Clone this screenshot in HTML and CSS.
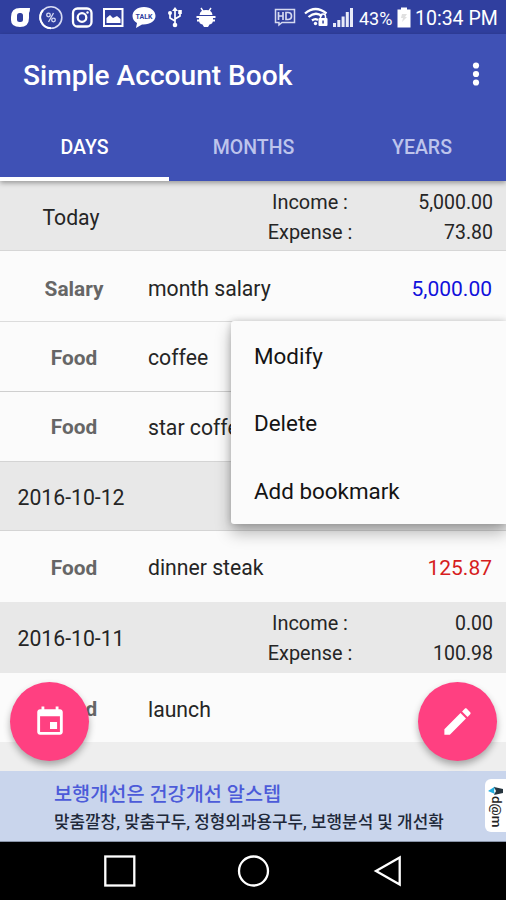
FILE: index.html
```html
<!DOCTYPE html>
<html lang="en">
<head>
<meta charset="utf-8">
<title>Simple Account Book</title>
<link rel="stylesheet" href="styles.css">
</head>
<body>
<div class="phone">
  <div class="status">
    <svg class="notices" width="220" height="34" viewBox="0 0 220 34" fill="none" stroke="#fff">
      <path d="M30 8H20Q11 8 11 17V20Q11 27 20 27Q29 27 29 18V13Q30 12 30 8Z" fill="#fff" stroke="none"/>
      <rect x="17" y="13" width="6" height="9" rx="2.500" fill="#303f9f" stroke="none"/>
      <circle cx="51" cy="17.500" r="10.800" stroke-width="1.600" stroke="#d8dcf4"/>
      <path d="M43 10A11 11 0 0 0 51 28.300" stroke-width="2"/>
      <g stroke-width="1.300" stroke="#d8dcf4"><circle cx="48.500" cy="15" r="1.800"/><circle cx="53.500" cy="20" r="1.800"/><path d="M53.500 13L48.500 22"/></g>
      <rect x="73" y="8.500" width="18.500" height="18" rx="4.500" stroke-width="2.300"/>
      <circle cx="82" cy="17.500" r="4.300" stroke-width="2.300"/>
      <circle cx="87.500" cy="12.500" r="1.200" fill="#fff" stroke="none"/>
      <rect x="104" y="9" width="18.500" height="17" stroke-width="2"/>
      <path d="M106.500 23V18L110 15L113 18L117 16L120.500 19V23Z" fill="#fff" stroke="none"/>
      <path d="M144 7C137 7 132.500 11 132.500 16C132.500 19.500 134.500 21.500 137 23L136 28L142 24.500C150 25 155.500 21 155.500 16C155.500 11 151 7 144 7Z" fill="#fff" stroke="none"/>
      <text class="talk" x="144" y="18.500" text-anchor="middle">TALK</text>
      <path d="M175 10V25M175 21L170 18V13M175 19L180 16V12" stroke-width="1.700"/>
      <path d="M175 7L178 11H172Z" fill="#fff" stroke="none"/>
      <rect x="178.200" y="10" width="3.600" height="4" fill="#fff" stroke="none"/>
      <circle cx="170" cy="13" r="2" fill="#fff" stroke="none"/><circle cx="175" cy="25" r="2.300" fill="#fff" stroke="none"/>
      <path d="M201 8L203 11M211 8L209 11" stroke-width="1.400"/>
      <path d="M199.500 15Q200 10 206 10Q212 10 212.500 15ZM199 16.500H213V20Q213 24 209.500 24.500L208 27H204L202.500 24.500Q199 24 199 20Z" fill="#fff" stroke="none"/>
      <path d="M196.500 17H215.500M197 20.500H215" stroke-width="1.800"/>
    </svg>
    <div class="system">
      <svg width="80" height="34" viewBox="274 0 80 34" fill="none" stroke="#d5d9f0">
        <path d="M275.500 9.500H294.500V22.500H282L279 25V22.500H275.500Z" stroke-width="1.500"/>
        <path d="M278.500 12V20M283 12V20M278.500 16H283M286 12.500V19.500H288Q291.500 19.500 291.500 16Q291.500 12.500 288 12.500Z" stroke-width="1.700"/>
        <g stroke="#fff" stroke-width="2.300"><path d="M305 13.500Q315.500 4.500 326.500 13.500M308.500 17Q315.500 11 322 16M312 20.500Q315 18 318 20"/></g>
        <circle cx="315.500" cy="23.500" r="1.700" fill="#fff" stroke="none"/>
        <rect x="318.500" y="18" width="9" height="8" rx="1" fill="#fff" stroke="none"/>
        <path d="M320.500 18V16.500A2.500 2.500 0 0 1 325.500 16.500V18" stroke="#fff" stroke-width="1.500"/>
        <rect x="322.300" y="20.500" width="1.500" height="3" fill="#303f9f" stroke="none"/>
        <path d="M333 23H336V27H333ZM337.300 20H340.300V27H337.300ZM341.600 16.500H344.600V27H341.600ZM345.800 12H348.800V27H345.800ZM350 8H353V27H350Z" fill="#e8eaf8" stroke="none"/>
      </svg>
      <span class="percent">43%</span>
      <svg width="14" height="34" viewBox="0 0 14 34"><path d="M4 7.500H10V9.500H13.500V27.500H.5V9.500H4Z" fill="#fff"/><path d="M5 14H10L8 17H10L5 22L6 18H4Z" fill="#e0e0e0"/></svg>
      <span class="clock">10:34 PM</span>
    </div>
  </div>
  <header class="appbar">
    <div class="titlebar">
      <h1>Simple Account Book</h1>
      <svg width="8" height="24" viewBox="0 0 8 24" fill="#fff"><circle cx="4" cy="3.500" r="3.100"/><circle cx="4" cy="12" r="3.100"/><circle cx="4" cy="20.500" r="3.100"/></svg>
    </div>
    <nav class="tabs"><span class="tab active">DAYS</span><span class="tab">MONTHS</span><span class="tab">YEARS</span></nav>
  </header>
  <main class="list">
    <section class="day first"><span class="date">Today</span><div class="labels"><span>Income :</span><span>Expense :</span></div><div class="totals"><span>5,000.00</span><span>73.80</span></div></section>
    <div class="entry tall salary"><b>Salary</b><span>month salary</span><span class="amount income">5,000.00</span></div>
    <div class="entry"><b>Food</b><span>coffee</span></div>
    <div class="entry short"><b>Food</b><span>star coffee</span></div>
    <section class="day middle"><span class="date">2016-10-12</span></section>
    <div class="entry tall plain"><b>Food</b><span>dinner steak</span><span class="amount expense">125.87</span></div>
    <section class="day last"><span class="date">2016-10-11</span><div class="labels"><span>Income :</span><span>Expense :</span></div><div class="totals"><span>0.00</span><span>100.98</span></div></section>
    <div class="entry short plain launch"><b>Food</b><span>launch</span></div>
    <div class="menu"><span>Modify</span><span>Delete</span><span>Add bookmark</span></div>
    <div class="fab calendar">
      <svg width="34" height="34" viewBox="0 0 24 24" fill="#fff"><path d="M17 12h-5v5h5v-5zM16 1v2H8V1H6v2H5c-1.110 0-1.990.9-1.990 2L3 19c0 1.100.89 2 2 2h14c1.100 0 2-.9 2-2V5c0-1.100-.9-2-2-2h-1V1h-2zm3 18H5V8h14v11z"/></svg>
    </div>
    <div class="fab edit">
      <svg width="35" height="35" viewBox="0 0 24 24" fill="#fff"><path d="M3 17.250V21h3.750L17.810 9.940l-3.750-3.750L3 17.250zM20.710 7.040c.39-.39.39-1.020 0-1.410l-2.340-2.340c-.39-.39-1.020-.39-1.410 0l-1.830 1.830 3.750 3.750 1.830-1.830z"/></svg>
    </div>
  </main>
  <aside class="ad">
    <div class="copy"><strong>보행개선은 건강개선 알스텝</strong><span>맞춤깔창, 맞춤구두, 정형외과용구두, 보행분석 및 개선확</span></div>
    <div class="brand">
      <svg width="16" height="10" viewBox="0 0 16 10"><path d="M0 5L7 .5L6 5L7 8Z" fill="#22aee0"/><path d="M6 1L15 3V7L6 9L8 5Z" fill="#26353f"/></svg>
      <span>d@m</span>
    </div>
  </aside>
  <footer class="navbar">
    <svg width="506" height="58" viewBox="0 0 506 58" fill="none" stroke="#fff" stroke-width="2.300"><rect x="105.300" y="14.500" width="29" height="29"/><circle cx="253.500" cy="29" r="14.500"/><path d="M376 29L399.700 15.500V42.500Z"/></svg>
  </footer>
</div>
</body>
</html>
```

FILE: styles.css
```css
* { box-sizing: border-box; }
body { margin: 0; font-family: Roboto, "Noto Sans CJK KR", sans-serif; color: #252525; }
.phone { width: 506px; height: 900px; display: flex; flex-direction: column; overflow: hidden; background: #eee; }
svg { display: block; flex: none; }
.status { height: 34px; background: #303f9f; display: flex; justify-content: space-between; color: #fff; }
.talk { font: bold 7px Roboto, sans-serif; fill: #303f9f; stroke: none; }
.system { display: flex; align-items: center; padding-right: 9px; line-height: 34px; white-space: nowrap; }
.percent { width: 38px; margin-left: 5px; font-size: 18px; padding-top: 3px; }
.clock { width: 82px; margin-left: 4px; font-size: 19.500px; padding-top: 3px; }
.appbar { height: 147px; background: #3f51b5; color: #fff; box-shadow: 0 2px 5px rgba(0,0,0,.35); z-index: 1; }
.titlebar { height: 82px; padding: 0 26px 0 23px; display: flex; align-items: center; justify-content: space-between; }
h1 { margin: 0; font-size: 28.100px; font-weight: 500; line-height: 36px; padding-top: 1px; }
.titlebar svg { margin-top: -2px; }
.tabs { height: 65px; display: grid; grid-template-columns: 169px 169px 168px; grid-template-rows: 65px; }
.tab { text-align: center; font-size: 19.500px; font-weight: 500; line-height: 64px; color: #bdc4ec; }
.tab.active { color: #fff; box-shadow: inset 0 -4px #fff; }
.list { position: relative; height: 590px; font-size: 21.200px; }
.day { display: grid; grid-template-columns: 142px 100px 136px 115px; align-items: center; background: #e8e8e8; padding-top: 2px; }
.first { height: 70px; padding-top: 4px; border-bottom: 1px solid #d6d6d6; }
.middle { height: 70px; border-top: 1px solid #d4d4d4; border-bottom: 1px solid #d4d4d4; }
.last { height: 71px; }
.date { text-align: center; }
.labels, .totals { display: flex; flex-direction: column; line-height: 29.500px; }
.labels { grid-column: 3; text-align: center; font-size: 19.900px; }
.totals { grid-column: 4; text-align: right; font-size: 19.500px; }
.entry { height: 70px; background: #fbfbfb; border-bottom: 1px solid #cfcfcf; display: grid; grid-template-columns: 148px 180px 164px; align-items: center; padding-top: 2px; }
.tall { height: 71px; }
.salary { padding-top: 5px; border-color: #dcdcdc; }
.short { height: 69px; border: 0; padding-top: 1px; }
.launch { padding-top: 3px; }
.plain { border: 0; }
.entry b { text-align: center; color: #666; font-weight: 700; font-size: 20.800px; }
.entry span { white-space: nowrap; }
.entry .amount { text-align: right; font-size: 21px; }
.income { color: #1010dc; }
.expense { color: #d61d20; }
.menu { position: absolute; left: 231px; top: 140px; width: 275px; height: 203px; background: #fbfbfb; border-radius: 3px 0 0 3px; box-shadow: 0 9px 16px rgba(0,0,0,.28), 0 0 7px rgba(0,0,0,.2); display: grid; grid-template-rows: repeat(3, 67.500px); align-items: center; padding: 1px 0 0 23px; font-size: 22.400px; color: #141414; }
.fab { position: absolute; top: 501px; width: 79px; height: 79px; border-radius: 50%; background: #ff4081; display: flex; align-items: center; justify-content: center; box-shadow: 0 4px 7px rgba(0,0,0,.3); }
.calendar { left: 10px; }
.edit { left: 418px; }
.ad { height: 71px; background: #c9d5ec; border-bottom: 1px solid #8994a8; display: flex; justify-content: space-between; align-items: center; }
.copy { padding: 3px 0 0 54px; display: flex; flex-direction: column; white-space: nowrap; }
.copy strong { color: #4c5bd9; font-size: 19.700px; font-weight: 500; line-height: 29px; }
.copy span { color: #202839; font-size: 16.900px; font-weight: 500; line-height: 27px; }
.brand { width: 21px; height: 53px; margin-top: -1px; background: #fff; border-radius: 6px 0 0 6px; padding: 7px 2px 0 3px; }
.brand span { writing-mode: vertical-rl; display: block; width: 15px; line-height: 12px; font-size: 13.500px; font-weight: 500; }
.navbar { height: 58px; background: #000; }
```
